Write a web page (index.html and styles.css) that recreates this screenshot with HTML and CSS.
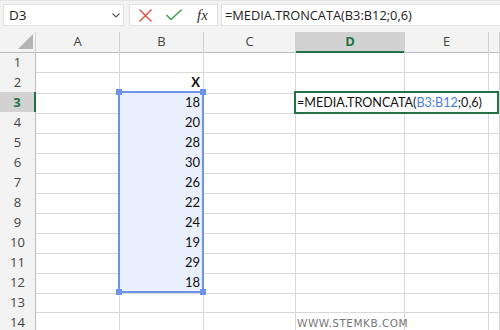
FILE: index.html
```html
<!DOCTYPE html>
<html>
<head>
    <title>MEDIA.TRONCATA</title>
    <link rel="stylesheet" href="styles.css">
</head>
<body>
    <div class="toolbar">
        <div class="name-box">
            <span>D3</span>
            <svg class="chevron" width="8" height="5" viewBox="0 0 8 5"><polyline points="0.5,0.5 4,4 7.5,0.5" fill="none" stroke="#555" stroke-width="1.1"/></svg>
        </div>
        <div class="fx-box">
            <svg width="13" height="13" viewBox="0 0 13 13"><path d="M0.5 0.5 L12.5 12.5 M12.5 0.5 L0.5 12.5" stroke="#e3463d" stroke-width="1.3" fill="none"/></svg>
            <svg width="16" height="12" viewBox="0 0 16 12"><polyline points="0.5,6 5,10.5 15.5,0.8" stroke="#3a9d4a" stroke-width="1.4" fill="none"/></svg>
            <span class="fx">fx</span>
        </div>
        <div class="formula-input">=MEDIA.TRONCATA(B3:B12;0,6)</div>
    </div>

    <div class="sheet">
        <div class="row head">
            <div class="corner"><span class="tri"></span></div>
            <div class="colhead">A</div>
            <div class="colhead">B</div>
            <div class="colhead">C</div>
            <div class="colhead active">D</div>
            <div class="colhead">E</div>
            <div class="colhead"></div>
        </div>
        <div class="row">
            <div class="rowhead">1</div><div class="cell"></div><div class="cell"></div><div class="cell"></div><div class="cell"></div><div class="cell"></div><div class="cell"></div>
        </div>
        <div class="row">
            <div class="rowhead">2</div><div class="cell"></div><div class="cell num bold">X</div><div class="cell"></div><div class="cell"></div><div class="cell"></div><div class="cell"></div>
        </div>
        <div class="row">
            <div class="rowhead active">3</div><div class="cell"></div><div class="cell num sel">18</div><div class="cell"></div><div class="cell"></div><div class="cell"></div><div class="cell"></div>
        </div>
        <div class="row">
            <div class="rowhead">4</div><div class="cell"></div><div class="cell num sel">20</div><div class="cell"></div><div class="cell"></div><div class="cell"></div><div class="cell"></div>
        </div>
        <div class="row">
            <div class="rowhead">5</div><div class="cell"></div><div class="cell num sel">28</div><div class="cell"></div><div class="cell"></div><div class="cell"></div><div class="cell"></div>
        </div>
        <div class="row">
            <div class="rowhead">6</div><div class="cell"></div><div class="cell num sel">30</div><div class="cell"></div><div class="cell"></div><div class="cell"></div><div class="cell"></div>
        </div>
        <div class="row">
            <div class="rowhead">7</div><div class="cell"></div><div class="cell num sel">26</div><div class="cell"></div><div class="cell"></div><div class="cell"></div><div class="cell"></div>
        </div>
        <div class="row">
            <div class="rowhead">8</div><div class="cell"></div><div class="cell num sel">22</div><div class="cell"></div><div class="cell"></div><div class="cell"></div><div class="cell"></div>
        </div>
        <div class="row">
            <div class="rowhead">9</div><div class="cell"></div><div class="cell num sel">24</div><div class="cell"></div><div class="cell"></div><div class="cell"></div><div class="cell"></div>
        </div>
        <div class="row">
            <div class="rowhead">10</div><div class="cell"></div><div class="cell num sel">19</div><div class="cell"></div><div class="cell"></div><div class="cell"></div><div class="cell"></div>
        </div>
        <div class="row">
            <div class="rowhead">11</div><div class="cell"></div><div class="cell num sel">29</div><div class="cell"></div><div class="cell"></div><div class="cell"></div><div class="cell"></div>
        </div>
        <div class="row">
            <div class="rowhead">12</div><div class="cell"></div><div class="cell num sel">18</div><div class="cell"></div><div class="cell"></div><div class="cell"></div><div class="cell"></div>
        </div>
        <div class="row">
            <div class="rowhead">13</div><div class="cell"></div><div class="cell"></div><div class="cell"></div><div class="cell"></div><div class="cell"></div><div class="cell"></div>
        </div>
        <div class="row">
            <div class="rowhead">14</div><div class="cell"></div><div class="cell"></div><div class="cell"></div><div class="cell watermark">WWW.STEMKB.COM</div><div class="cell"></div><div class="cell"></div>
        </div>

        <!-- range selection B3:B12 -->
        <div class="range">
            <span class="handle tl"></span>
            <span class="handle tr"></span>
            <span class="handle bl"></span>
            <span class="handle br"></span>
        </div>

        <!-- cell being edited -->
        <div class="editor">=MEDIA.TRONCATA(<span class="ref">B3:B12</span>;0,6)</div>
    </div>
</body>
</html>
```

FILE: styles.css
```css
body {
    margin: 0;
    width: 500px;
    height: 330px;
    overflow: hidden;
    background: #fff;
    font-family: "Open Sans", "Noto Sans", sans-serif;
    color: #222;
}
.toolbar {
    display: flex;
    height: 32px;
    padding: 3px 0 0 3px;
    box-sizing: border-box;
    background: #f3f3f3;
    border-top: 1px solid #e4e4e4;
}
.name-box, .fx-box, .formula-input {
    height: 22px;
    box-sizing: border-box;
    background: #fff;
    border: 1px solid #e1e1e1;
}
.name-box {
    width: 121px;
    display: flex;
    align-items: center;
    justify-content: space-between;
    padding: 0 3px 0 5px;
    font-size: 13.5px;
    color: #222;
}
.chevron {
    margin-top: 1px;
}
.fx-box {
    width: 89px;
    margin-left: 5px;
    display: flex;
    align-items: center;
    padding-left: 9px;
}
.fx-box svg:nth-child(2) {
    margin-left: 14px;
}
.fx {
    margin-left: 15px;
    font-family: "Liberation Serif", serif;
    font-style: italic;
    font-size: 15px;
    color: #333;
}
.formula-input {
    flex: 1;
    margin-left: 3px;
    border-right: none;
    padding-left: 3px;
    font-size: 12.8px;
    line-height: 20px;
    color: #222;
}
.sheet {
    position: relative;
}
.row {
    display: grid;
    grid-template-columns: 36px 84px 84px 92px 109px 84px 1fr;
    height: 20px;
}
.row > div {
    box-sizing: border-box;
    border-right: 1px solid #d9d9d9;
    border-bottom: 1px solid #d9d9d9;
}
.head > div {
    background: #f3f3f3;
    border-bottom: 1px solid #bdbdbd;
    border-right: 1px solid #d0d0d0;
}
.corner {
    position: relative;
}
.tri {
    position: absolute;
    right: 2px;
    bottom: 3px;
    width: 15px;
    height: 15px;
    background: #b5b5b5;
    clip-path: polygon(100% 0, 100% 100%, 0 100%);
}
.colhead {
    text-align: center;
    font-size: 13px;
    line-height: 19px;
    color: #444;
}
.colhead.active {
    background: #d2d2d2;
    border-bottom: 2px solid #217346;
    color: #217346;
    font-weight: bold;
}
.row > .rowhead {
    background: #f3f3f3;
    border-right: 1px solid #bdbdbd;
    border-bottom: 1px solid #d9d9d9;
    text-align: center;
    font-size: 13px;
    line-height: 20px;
    color: #444;
}
.row > .rowhead.active {
    background: #d2d2d2;
    border-right: 2px solid #217346;
    color: #217346;
    font-weight: bold;
}
.cell {
    font-family: "Lato", "Liberation Sans", sans-serif;
    font-size: 13px;
    line-height: 21px;
    color: #111;
}
.num {
    text-align: right;
    padding-right: 3px;
}
.bold {
    font-weight: bold;
}
.sel {
    background: #e9effb;
}
.watermark {
    font-family: "DejaVu Sans", sans-serif;
    font-size: 10.5px;
    letter-spacing: 0.5px;
    color: #777;
    padding-left: 1px;
    line-height: 22px;
}
.range {
    position: absolute;
    left: 118px;
    top: 59px;
    width: 86px;
    height: 202px;
    box-sizing: border-box;
    border: 2px solid #6d93e6;
}
.handle {
    position: absolute;
    width: 6px;
    height: 6px;
    background: #6d93e6;
}
.tl { left: -4px; top: -4px; }
.tr { right: -4px; top: -4px; }
.bl { left: -4px; bottom: -4px; }
.br { right: -4px; bottom: -4px; }
.editor {
    position: absolute;
    left: 294px;
    top: 59px;
    width: 205px;
    height: 23px;
    box-sizing: border-box;
    border: 2px solid #217346;
    background: #fff;
    padding-left: 1px;
    font-family: "Lato", "Liberation Sans", sans-serif;
    font-size: 12.6px;
    line-height: 19px;
    color: #111;
    white-space: nowrap;
}
.ref {
    color: #4a7fe0;
}
```
